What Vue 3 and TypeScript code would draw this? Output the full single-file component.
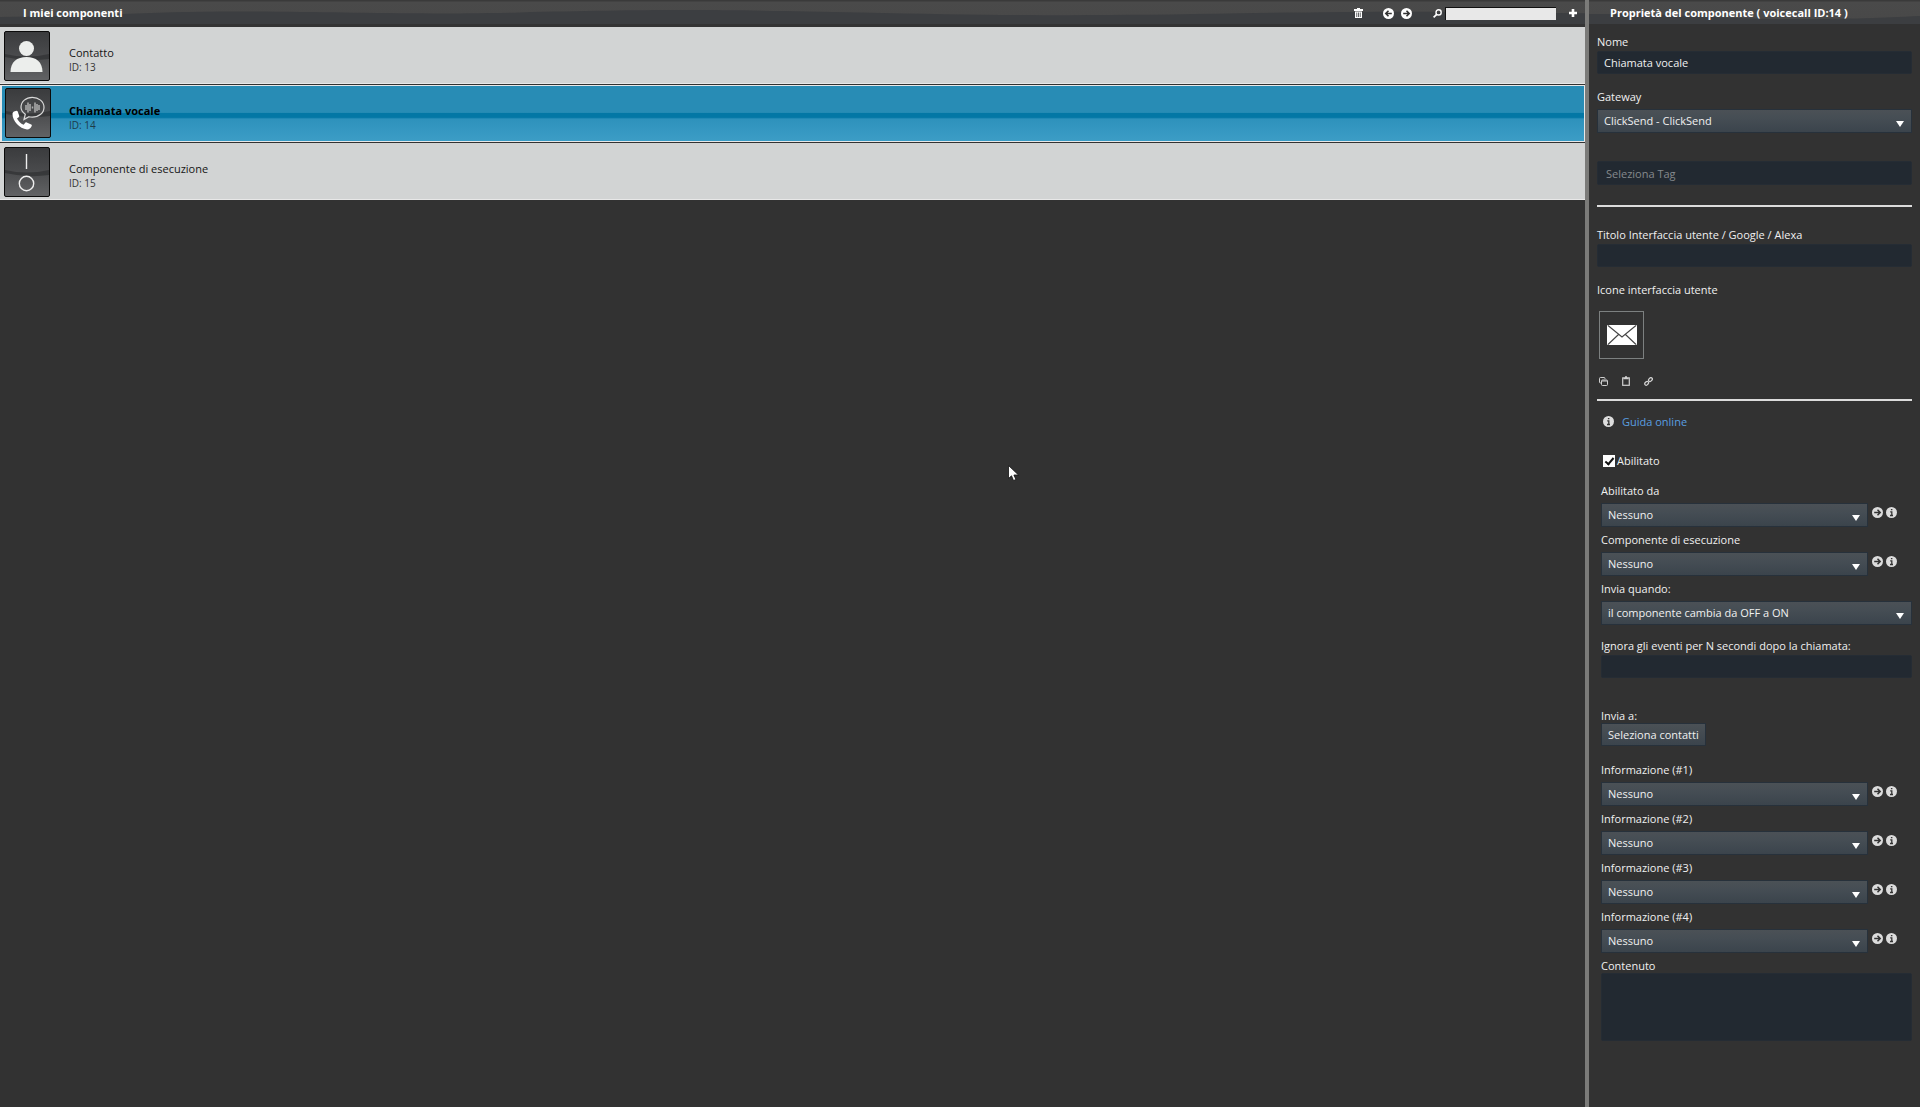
<script setup lang="ts">
import { ref } from 'vue'

interface Component {
  id: number
  name: string
  icon: 'contact' | 'call' | 'switch'
}

const components: Component[] = [
  { id: 13, name: 'Contatto', icon: 'contact' },
  { id: 14, name: 'Chiamata vocale', icon: 'call' },
  { id: 15, name: 'Componente di esecuzione', icon: 'switch' },
]
const triggers = ['Abilitato da', 'Componente di esecuzione']
const infos = [1, 2, 3, 4].map((n) => `Informazione (#${n})`)

const selectedId = ref(14)
const search = ref('')
const name = ref('Chiamata vocale')
const tag = ref('')
const title = ref('')
const enabled = ref(true)
const ignoreSeconds = ref('')
const content = ref('')
</script>

<template>
  <div class="app">
    <main class="list-pane">
      <header class="bar">
        <svg class="wave" viewBox="0 0 1585 27" preserveAspectRatio="none" aria-hidden="true">
          <path d="M0 19C90 19 140 13 240 13S400 17 520 14 700 10 860 14 1100 18 1240 15 1480 13 1585 15V27H0Z" />
        </svg>
        <h1>I miei componenti</h1>
        <div class="tools">
          <button class="tool trash" aria-label="Elimina">
            <svg width="9" height="10" viewBox="0 0 9 10">
              <path fill="currentColor" fill-rule="evenodd" d="M3 0h3v1h3v2H0V1h3zM1 3.5h7V10H1zM2.4 4.5v4.4h.8V4.5zM4.1 4.5v4.4h.8V4.5zM5.8 4.5v4.4h.8V4.5z" />
            </svg>
          </button>
          <button class="tool prev" aria-label="Indietro">
            <svg width="11" height="11" viewBox="0 0 11 11">
              <circle cx="5.5" cy="5.5" r="5.5" fill="currentColor" />
              <path d="M8.8 5.5H3M5.5 2.8 2.8 5.5l2.7 2.7" fill="none" stroke="#333" stroke-width="1.6" />
            </svg>
          </button>
          <button class="tool next" aria-label="Avanti">
            <svg width="11" height="11" viewBox="0 0 11 11">
              <circle cx="5.5" cy="5.5" r="5.5" fill="currentColor" />
              <path d="M2.2 5.5H8M5.5 2.8l2.7 2.7-2.7 2.7" fill="none" stroke="#333" stroke-width="1.6" />
            </svg>
          </button>
          <label class="search">
            <svg width="9" height="9" viewBox="0 0 9 9" aria-label="Cerca">
              <circle cx="5.6" cy="3.4" r="2.6" fill="none" stroke="currentColor" stroke-width="1.4" />
              <path d="M3.7 5.3.6 8.3" stroke="currentColor" stroke-width="1.8" />
            </svg>
            <input v-model="search" type="text" />
          </label>
          <button class="tool" aria-label="Aggiungi">
            <svg width="8" height="8" viewBox="0 0 8 8">
              <path d="M4 0v8M0 4h8" stroke="currentColor" stroke-width="2.6" />
            </svg>
          </button>
        </div>
      </header>

      <ul class="rows">
        <li
          v-for="c in components"
          :key="c.id"
          class="row"
          :class="{ selected: c.id === selectedId }"
          @click="selectedId = c.id"
        >
          <svg class="tile" width="46" height="50" viewBox="0 0 46 50" aria-hidden="true">
            <defs>
              <linearGradient :id="`tile-${c.id}`" x1="0" y1="0" x2="0" y2="1">
                <stop offset="0" stop-color="#3a3b3d" />
                <stop offset=".5" stop-color="#4a4b4d" />
                <stop offset="1" stop-color="#626365" />
              </linearGradient>
            </defs>
            <rect x=".5" y=".5" width="45" height="49" rx="1.5" :fill="`url(#tile-${c.id})`" stroke="#0b0b0b" />
            <path d="M1 23Q23 28 45 23V28Q23 31 1 26Z" fill="#2f3032" opacity=".7" />
            <g v-if="c.icon === 'contact'" fill="#eceeec">
              <circle cx="22.5" cy="17.5" r="7.5" />
              <path d="M6.5 41C6.5 31 13 26 22.5 26s16 5 16 15z" />
            </g>
            <g v-else-if="c.icon === 'call'">
              <path
                d="M19 31.5l1.3-5.3C17.5 24.3 16 22 16 19.2 16 13.5 21 9.3 27.3 9.3S39 13.5 39 19.2s-5 9.9-11.7 9.9c-1.2 0-2.3-.1-3.3-.4z"
                fill="none" stroke="#d8d8d8" stroke-width="1.2"
              />
              <path d="M21 17v5M23 14.5v10M25 16v7M27.5 18.5v2M30 14.5v10M32 16v7M34 17v5" stroke="#b0b0b0" stroke-width="1.5" />
              <path
                d="M9 23.5l2.5-.7c.6 0 1 .3 1.2.8l1.5 4.2c.2.6 0 1-.5 1.4L12 30.5c1.6 3 3.6 5 6.6 6.3l1.7-2.1c.4-.4.9-.5 1.4-.3l4.5 2.1c.7.4.8.9.5 1.5-1 2.3-2.5 3.6-4.7 3.5C14.5 40.5 7.5 33 7.5 26c0-1 .6-2 1.5-2.5z"
                fill="#fff"
              />
            </g>
            <g v-else fill="none" stroke="#eee" stroke-width="1.4">
              <path d="M22.5 7v15" />
              <circle cx="22.5" cy="36.5" r="7.2" />
            </g>
          </svg>
          <div class="row-text">
            <div class="row-name">{{ c.name }}</div>
            <div class="row-id">ID: {{ c.id }}</div>
          </div>
        </li>
      </ul>

      <svg class="pointer" width="12" height="17" viewBox="0 0 12 17" aria-hidden="true">
        <path d="M.5.5v13l3-2.7 2 4.7 2.4-1-2-4.5h4.6z" fill="#fff" stroke="#111" stroke-width=".8" />
      </svg>
    </main>

    <aside class="props">
      <header class="bar">
        <svg class="wave" viewBox="0 0 331 24" preserveAspectRatio="none" aria-hidden="true">
          <path d="M0 14C90 13 130 19 200 19S290 18 331 16V24H0Z" />
        </svg>
        <h2>Proprietà del componente ( voicecall ID:14 )</h2>
      </header>

      <form class="body" @submit.prevent>
        <div class="field">
          <label for="name">Nome</label>
          <input id="name" v-model="name" type="text" />
        </div>
        <div class="field gateway">
          <label for="gateway">Gateway</label>
          <div class="picker">
            <select id="gateway"><option>ClickSend - ClickSend</option></select>
          </div>
        </div>
        <input v-model="tag" class="tag" type="text" placeholder="Seleziona Tag" aria-label="Seleziona Tag" />
        <hr />
        <div class="field">
          <label for="title">Titolo Interfaccia utente / Google / Alexa</label>
          <input id="title" v-model="title" type="text" />
        </div>
        <div class="ui-label">Icone interfaccia utente</div>
        <button class="ui-icon" type="button" aria-label="Icona interfaccia utente">
          <svg width="30" height="20" viewBox="0 0 30 20">
            <rect width="30" height="20" rx="1" fill="#fff" />
            <path d="M1 .5 15 12 29 .5M1 19.5 11.5 9.5M29 19.5 18.5 9.5" fill="none" stroke="#444" stroke-width="1.1" />
          </svg>
        </button>
        <div class="clip">
          <button type="button" aria-label="Copia">
            <svg width="9" height="9" viewBox="0 0 9 9" fill="none" stroke="currentColor">
              <path d="M2 6H1.5Q.5 6 .5 5V1.5q0-1 1-1H5q1 0 1 1V2" />
              <rect x="2.5" y="3" width="6" height="5.5" rx="1" />
              <path d="M3 4h5" />
            </svg>
          </button>
          <button type="button" aria-label="Incolla">
            <svg width="8" height="10" viewBox="0 0 8 10" fill="none" stroke="currentColor">
              <rect x=".7" y="1.9" width="6.6" height="7.4" stroke-width="1.2" />
              <path d="M1.5 2.5h5M3 1h2" stroke-width="1.6" />
            </svg>
          </button>
          <button type="button" aria-label="Collega">
            <svg width="9" height="9" viewBox="0 0 9 9" fill="none" stroke="currentColor" stroke-width="1.3">
              <rect x="-1.9" y="-1.3" width="4.2" height="2.9" rx="1.3" transform="translate(6.2 2.6) rotate(-45)" />
              <rect x="-2.1" y="-1.5" width="4.2" height="2.9" rx="1.3" transform="translate(2.7 6.3) rotate(-45)" />
            </svg>
          </button>
        </div>
        <hr />

        <div class="details">
          <div class="guide">
            <svg width="11" height="11" viewBox="0 0 11 11" aria-hidden="true">
              <circle cx="5.5" cy="5.5" r="5.5" fill="#ddd" />
              <path d="M4.2 4.8h1.6V8.5M4 8.5h3M4.9 2.7h1.5" fill="none" stroke="#333" stroke-width="1.3" />
            </svg>
            <a href="#">Guida online</a>
          </div>
          <label class="check"><input v-model="enabled" type="checkbox" />Abilitato</label>

          <div v-for="(label, i) in triggers" :key="label" class="field compact">
            <label :for="`trigger-${i}`">{{ label }}</label>
            <div class="line">
              <div class="picker"><select :id="`trigger-${i}`"><option>Nessuno</option></select></div>
              <button type="button" aria-label="Vai al componente">
                <svg width="11" height="11" viewBox="0 0 11 11">
                  <circle cx="5.5" cy="5.5" r="5.5" fill="currentColor" />
                  <path d="M2.2 5.5H8M5.5 2.8l2.7 2.7-2.7 2.7" fill="none" stroke="#333" stroke-width="1.5" />
                </svg>
              </button>
              <button type="button" aria-label="Informazioni">
                <svg width="11" height="11" viewBox="0 0 11 11">
                  <circle cx="5.5" cy="5.5" r="5.5" fill="currentColor" />
                  <path d="M4.2 4.8h1.6V8.5M4 8.5h3M4.9 2.7h1.5" fill="none" stroke="#333" stroke-width="1.3" />
                </svg>
              </button>
            </div>
          </div>

          <div class="field compact">
            <label for="when">Invia quando:</label>
            <div class="picker"><select id="when"><option>il componente cambia da OFF a ON</option></select></div>
          </div>
          <div class="field ignore">
            <label for="ignore">Ignora gli eventi per N secondi dopo la chiamata:</label>
            <input id="ignore" v-model="ignoreSeconds" type="text" />
          </div>
          <div class="field tight send">
            <label for="contacts">Invia a:</label>
            <button id="contacts" class="contacts" type="button">Seleziona contatti</button>
          </div>

          <div v-for="(label, i) in infos" :key="label" class="field compact">
            <label :for="`info-${i}`">{{ label }}</label>
            <div class="line">
              <div class="picker"><select :id="`info-${i}`"><option>Nessuno</option></select></div>
              <button type="button" aria-label="Vai al componente">
                <svg width="11" height="11" viewBox="0 0 11 11">
                  <circle cx="5.5" cy="5.5" r="5.5" fill="currentColor" />
                  <path d="M2.2 5.5H8M5.5 2.8l2.7 2.7-2.7 2.7" fill="none" stroke="#333" stroke-width="1.5" />
                </svg>
              </button>
              <button type="button" aria-label="Informazioni">
                <svg width="11" height="11" viewBox="0 0 11 11">
                  <circle cx="5.5" cy="5.5" r="5.5" fill="currentColor" />
                  <path d="M4.2 4.8h1.6V8.5M4 8.5h3M4.9 2.7h1.5" fill="none" stroke="#333" stroke-width="1.3" />
                </svg>
              </button>
            </div>
          </div>

          <div class="field tight">
            <label for="content">Contenuto</label>
            <textarea id="content" v-model="content"></textarea>
          </div>
        </div>
      </form>
    </aside>
  </div>
</template>

<style>
body {
  background: #323232;
}
</style>

<style scoped>
.app {
  display: flex;
  min-height: 100vh;
  background: #323232;
  color: #f0f0f0;
  font: 11px/16px "Open Sans", "Noto Sans", sans-serif;
}
*,
*::before,
*::after {
  box-sizing: border-box;
}
button,
input,
select,
textarea {
  font: inherit;
  color: inherit;
}
button {
  display: flex;
  padding: 0;
  border: 0;
  background: none;
}
svg {
  display: block;
  flex: none;
}

.list-pane {
  position: relative;
  flex: 1;
  min-width: 0;
}
.bar {
  position: relative;
  display: flex;
  align-items: center;
  background: linear-gradient(#3a3a3a 1px, #4a4a4a 2px, #484848);
  color: #fff;
}
.wave {
  position: absolute;
  inset: 0;
  width: 100%;
  height: 100%;
  fill: #3c3e41;
}
.list-pane .bar {
  height: 27px;
  padding: 2px 8px 0 23px;
  border-bottom: 3px solid #343434;
}
h1,
h2 {
  position: relative;
  flex: 1;
  margin: 0;
  font-size: 11px;
  line-height: 16px;
  font-weight: 700;
  white-space: nowrap;
}
.tools {
  position: relative;
  display: flex;
  align-items: center;
}
.trash {
  margin-right: 20px;
}
.prev {
  margin-right: 7px;
}
.next {
  margin-right: 21px;
}
.search {
  display: flex;
  align-items: center;
  gap: 3px;
  margin-right: 13px;
}
.search input {
  width: 111px;
  height: 13px;
  padding: 0 4px;
  border: solid #111;
  border-width: 1px 0 0 1px;
  background: #e8e8e8;
  color: #222;
}

.rows {
  display: flex;
  flex-direction: column;
  gap: 1px;
  margin: 0;
  padding: 0;
  list-style: none;
}
.row {
  display: flex;
  height: 57px;
  padding: 4px 4px 3px;
  border-bottom: 1px solid #e8e8e8;
  background: #d2d4d4;
}
.row.selected {
  padding: 2px 3px;
  border: 1px solid #e8e8e8;
  border-left-width: 2px;
  background: linear-gradient(#288cb5 48%, #0377a5 50%, #0377a5 57%, #2e92bc 60%, #3c9dc6);
}
.row-text {
  margin: 14px 0 0 19px;
  line-height: 15px;
}
.selected .row-text {
  margin: 15px 0 0 18px;
}
.row-name {
  color: #151515;
}
.selected .row-name {
  color: #000;
  font-weight: 700;
}
.row-id {
  color: #333;
  font-size: 10px;
}
.selected .row-id {
  color: #1d3b48;
}
.pointer {
  position: absolute;
  left: 1008px;
  top: 465px;
}

.props {
  flex: none;
  width: 335px;
  border-left: 4px solid #7b7b79;
}
.props .bar {
  height: 24px;
  padding: 2px 0 0 21px;
}
.body {
  padding: 10px 8px;
}
.field {
  display: flex;
  flex-direction: column;
}
.field > label,
.ui-label {
  height: 17px;
  line-height: 16px;
  white-space: nowrap;
}
.tight > label {
  height: 15px;
}
.field input,
.tag,
textarea {
  width: 100%;
  height: 23px;
  margin: 0;
  padding: 0 6px;
  border: 1px solid #252c34;
  border-radius: 2px;
  background: #222931;
}
.gateway {
  margin-top: 15px;
  gap: 3px;
}
.picker {
  position: relative;
  flex: 1;
}
.picker::after {
  content: "";
  position: absolute;
  right: 8px;
  top: 12px;
  border: solid transparent;
  border-width: 6px 4px 0;
  border-top-color: #fff;
  pointer-events: none;
}
select {
  display: block;
  width: 100%;
  height: 24px;
  padding: 0 6px;
  border: 1px solid #27313b;
  appearance: none;
  background: linear-gradient(#4b5156, #454d54 40%, #3b444c);
}
.tag {
  display: block;
  height: 24px;
  margin-top: 28px;
  padding: 0 8px;
}
.tag::placeholder {
  color: #85898d;
  opacity: 1;
}
hr {
  height: 2px;
  margin: 20px 0;
  border: 0;
  background: #dcdcdc;
}
.ui-label {
  margin-top: 15px;
}
.ui-icon {
  align-items: center;
  justify-content: center;
  width: 45px;
  height: 48px;
  margin: 12px 0 0 2px;
  border: 1px solid #7c8080;
}
.clip {
  display: flex;
  align-items: center;
  gap: 14px;
  height: 10px;
  margin: 17px 0 0 2px;
  color: #d0d0d0;
}
.clip + hr {
  margin: 13px 0 12px;
}
.details {
  padding-left: 4px;
}
.guide {
  display: flex;
  align-items: center;
  gap: 8px;
  height: 17px;
  padding-left: 2px;
}
a {
  color: #5a9fe0;
  text-decoration: none;
}
.check {
  display: flex;
  align-items: center;
  gap: 2px;
  margin: 23px 0 14px 2px;
}
.check input {
  display: grid;
  place-items: center;
  width: 12px;
  height: 12px;
  margin: 0;
  appearance: none;
  background: #fff;
}
.check input:checked::before {
  content: "";
  width: 5px;
  height: 9px;
  margin-top: -2px;
  border: solid #111;
  border-width: 0 2px 2px 0;
  transform: rotate(40deg);
}
.compact {
  gap: 3px;
  margin-bottom: 5px;
}
.line {
  display: flex;
  align-items: center;
  gap: 3px;
  padding-right: 15px;
}
.line .picker {
  margin-right: 1px;
}
.line button {
  margin-bottom: 5px;
  color: #dcdcdc;
}
.ignore {
  margin-top: 13px;
}
.send {
  margin: 30px 0 16px;
}
.contacts {
  align-items: center;
  align-self: flex-start;
  height: 23px;
  padding: 0 6px;
  border: 1px solid #27313b;
  background: linear-gradient(#4b5156, #3b444c);
}
textarea {
  display: block;
  height: 68px;
  padding: 4px 6px;
  resize: none;
}
</style>
